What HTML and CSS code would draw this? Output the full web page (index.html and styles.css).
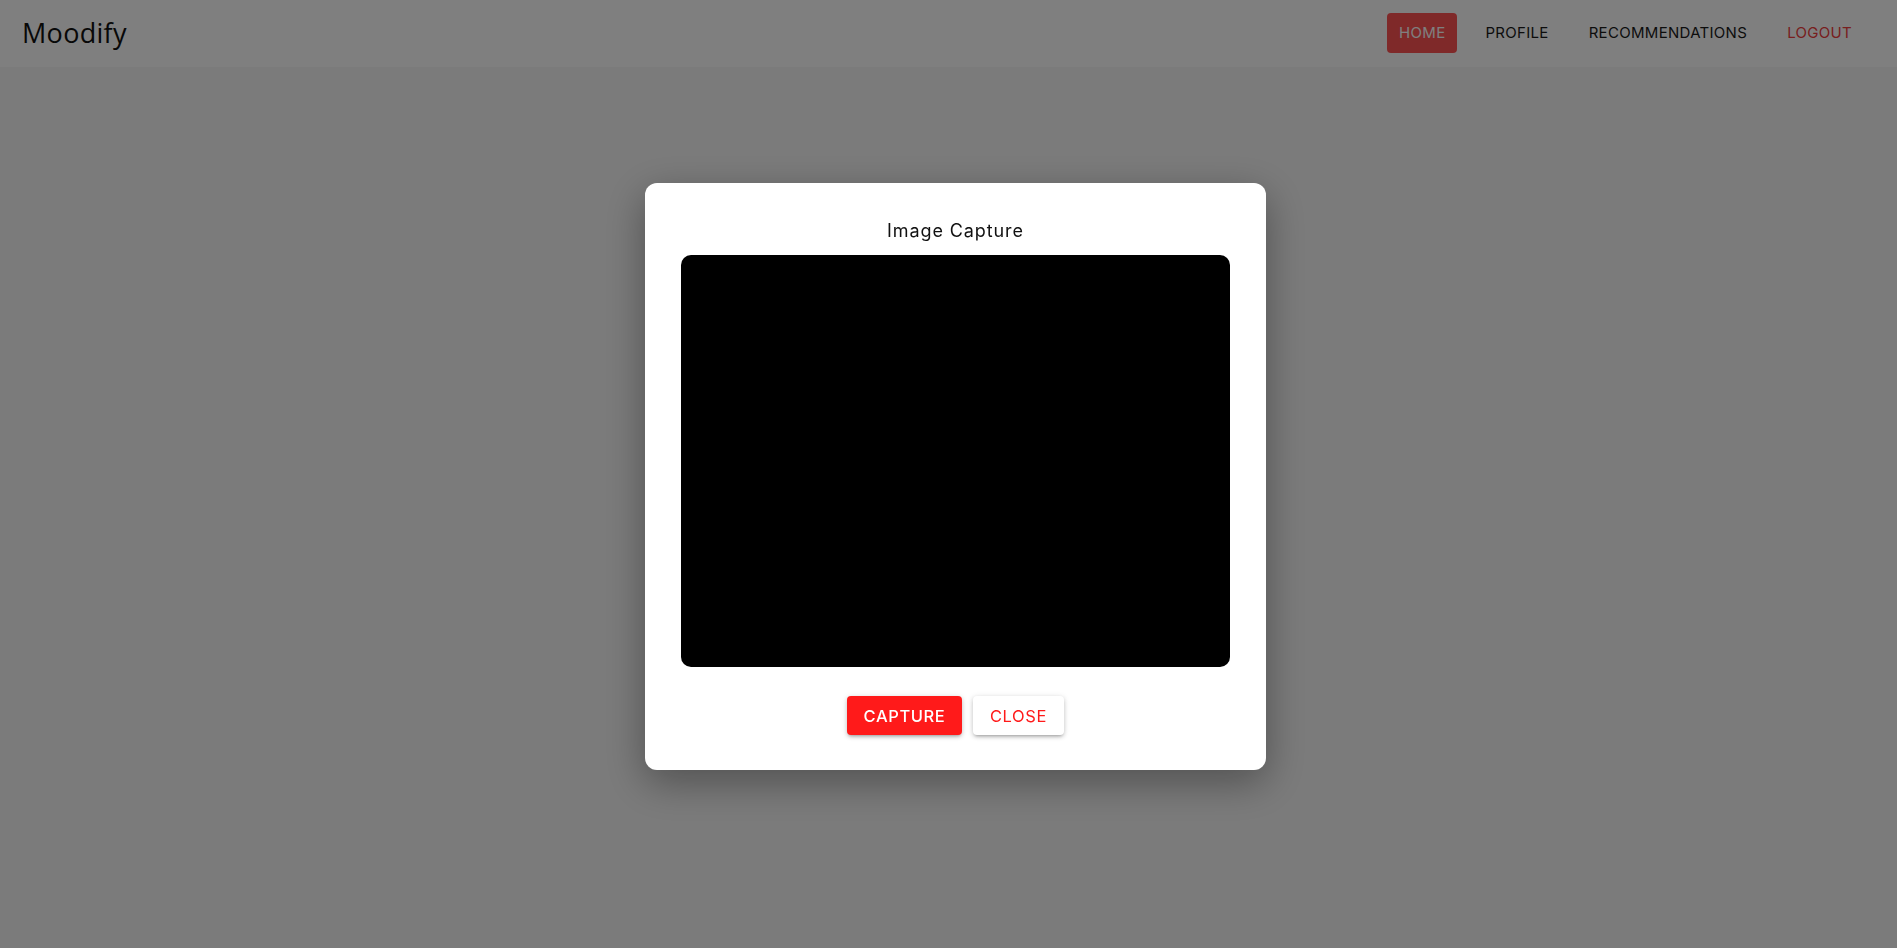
FILE: index.html
```html
<!DOCTYPE html>
<html lang="en">
<head>
<meta charset="utf-8">
<title>Moodify</title>
<link rel="stylesheet" href="styles.css">
</head>
<body>
<header class="navbar">
  <div class="logo">Moodify</div>
  <nav class="nav">
    <a class="nav-item active">HOME</a>
    <a class="nav-item">PROFILE</a>
    <a class="nav-item">RECOMMENDATIONS</a>
    <a class="nav-item logout">LOGOUT</a>
  </nav>
</header>
<main class="page"></main>
<div class="overlay">
  <div class="modal">
    <h2 class="modal-title">Image Capture</h2>
    <div class="video"></div>
    <div class="actions">
      <button class="btn btn-primary">CAPTURE</button>
      <button class="btn btn-secondary">CLOSE</button>
    </div>
  </div>
</div>
</body>
</html>
```

FILE: styles.css
```css
html, body {
  margin: 0;
  padding: 0;
  height: 100%;
}
body {
  background: #f6f6f6;
  font-family: "Inter", "Liberation Sans", sans-serif;
  overflow: hidden;
}
.navbar {
  height: 67px;
  background: #ffffff;
  display: flex;
  align-items: center;
  justify-content: space-between;
  padding: 0 33px 2px 23px;
  box-sizing: border-box;
}
.logo {
  font-family: "Open Sans", sans-serif;
  font-size: 27px;
  line-height: 36px;
  color: #111;
  letter-spacing: 0.3px;
  margin-left: -1px;
}
.nav {
  display: flex;
  align-items: center;
  gap: 16px;
}
.nav-item {
  display: flex;
  align-items: center;
  height: 40px;
  padding: 0 12px;
  border-radius: 4px;
  font-size: 15px;
  color: #1a1a1a;
  letter-spacing: 0.3px;
  cursor: pointer;
}
.nav-item.active {
  background: #ff5252;
  color: #ffffff;
}
.nav-item.logout {
  color: #f03c3c;
}
.overlay {
  position: fixed;
  inset: 0;
  background: rgba(0, 0, 0, 0.5);
  display: flex;
  align-items: center;
  justify-content: center;
  padding: 5px 0 0 14px;
  box-sizing: border-box;
}
.modal {
  width: 621px;
  box-sizing: border-box;
  background: #ffffff;
  border-radius: 12px;
  padding: 33px 36px 35px;
  box-shadow: 0 12px 40px rgba(0, 0, 0, 0.35);
}
.modal-title {
  margin: 0 0 10px;
  text-align: center;
  font-size: 18px;
  font-weight: 400;
  line-height: 29px;
  letter-spacing: 0.9px;
  color: #111;
}
.video {
  height: 412px;
  background: #000;
  border-radius: 10px;
}
.actions {
  margin-top: 29px;
  display: flex;
  justify-content: center;
  gap: 11px;
}
.btn {
  height: 39px;
  border: none;
  border-radius: 4px;
  font-family: "Inter", "Liberation Sans", sans-serif;
  font-size: 16.5px;
  letter-spacing: 0.6px;
  padding: 0;
  cursor: pointer;
  box-shadow: 0 3px 3px -2px rgba(0,0,0,0.2), 0 2px 4px 0 rgba(0,0,0,0.14), 0 1px 6px 0 rgba(0,0,0,0.12);
}
.btn-primary {
  background: #ff1a1a;
  color: #ffffff;
  font-weight: 500;
  width: 115px;
}
.btn-secondary {
  background: #ffffff;
  color: #ff1a1a;
  font-weight: 400;
  width: 91px;
}
```
